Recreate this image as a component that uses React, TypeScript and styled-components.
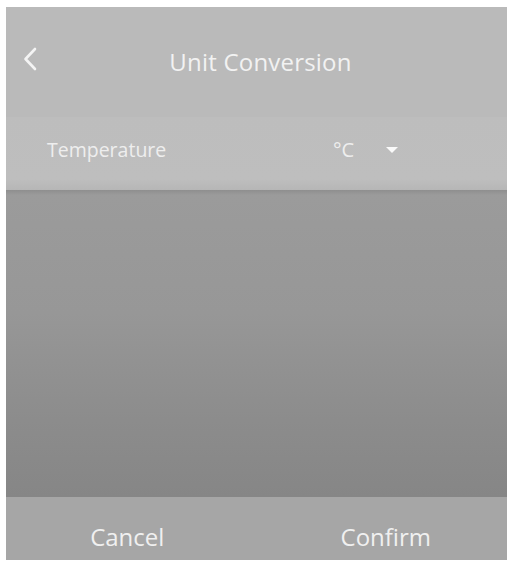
import React from "react";
import styled, { createGlobalStyle } from "styled-components";

const GlobalStyle = createGlobalStyle`
    html, body {
        margin: 0;
        padding: 0;
        background: #ffffff;
    }

    body {
        font-family: "Open Sans", "Noto Sans", "Liberation Sans", sans-serif;
    }
`;

export default function App() {
    return (
        <>
            <GlobalStyle />
            <Page>
                <Panel>
                    <Header>
                        <BackButton aria-label="Back">
                            <svg width="14" height="24" viewBox="0 0 14 24">
                                <path
                                    d="M12 2 L2.5 12 L12 22"
                                    fill="none"
                                    stroke="#f4f4f4"
                                    strokeWidth="2.6"
                                    strokeLinecap="round"
                                    strokeLinejoin="round"
                                />
                            </svg>
                        </BackButton>
                        <Title>Unit Conversion</Title>
                    </Header>
                    <SettingRow>
                        <Label>Temperature</Label>
                        <Value>
                            °C
                            <Caret />
                        </Value>
                    </SettingRow>
                    <Picker />
                    <Footer>
                        <FooterButton>Cancel</FooterButton>
                        <FooterButton $shift={16}>Confirm</FooterButton>
                    </Footer>
                </Panel>
            </Page>
        </>
    );
}

const Page = styled.div`
    width: 512px;
    height: 562px;
    padding: 7px 5px 2px 6px;
    box-sizing: border-box;
`

const Panel = styled.div`
    display: flex;
    flex-direction: column;
    height: 100%;
    background: #bbbbbb;
`

const Header = styled.div`
    position: relative;
    height: 110px;
    display: flex;
    align-items: center;
    justify-content: center;
    background: #bababa;
`

const BackButton = styled.button`
    position: absolute;
    left: 17px;
    top: 40px;
    padding: 0;
    border: none;
    background: none;
    display: flex;
`

const Title = styled.div`
    color: #f2f2f2;
    font-size: 24px;
    font-weight: 500;
    margin: -2px 0 0 8px;
    letter-spacing: 0.2px;
`

const SettingRow = styled.div`
    height: 73px;
    display: flex;
    align-items: center;
    padding-left: 41px;
    background: linear-gradient(to bottom, #bdbdbd, #bebebe 85%, #b6b6b6);
`

const Label = styled.div`
    width: 286px;
    color: #eeeeee;
    font-size: 19.5px;
    font-weight: 500;
    margin-top: -8px;
`

const Value = styled.div`
    display: flex;
    align-items: center;
    gap: 32px;
    color: #eeeeee;
    font-size: 20px;
    font-weight: 500;
    margin-top: -8px;
`

const Caret = styled.span`
    width: 0;
    height: 0;
    border-left: 6px solid transparent;
    border-right: 6px solid transparent;
    border-top: 6px solid #fafafa;
`

const Picker = styled.div`
    flex: 1;
    background: linear-gradient(to bottom, #8e8e8e 0px, #9b9b9b 5px, #979797 40%, #8c8c8c 75%, #868686 100%);
`

const Footer = styled.div`
    height: 63px;
    display: flex;
    background: #a6a6a6;
`

const FooterButton = styled.button<{ $shift?: number }>`
    flex: 1;
    border: none;
    background: none;
    color: #f0f0f0;
    font-family: "Open Sans", "Noto Sans", "Liberation Sans", sans-serif;
    font-size: 24px;
    font-weight: 500;
    padding: 16px 0 0 ${(p) => p.$shift ?? 0}px;
`
